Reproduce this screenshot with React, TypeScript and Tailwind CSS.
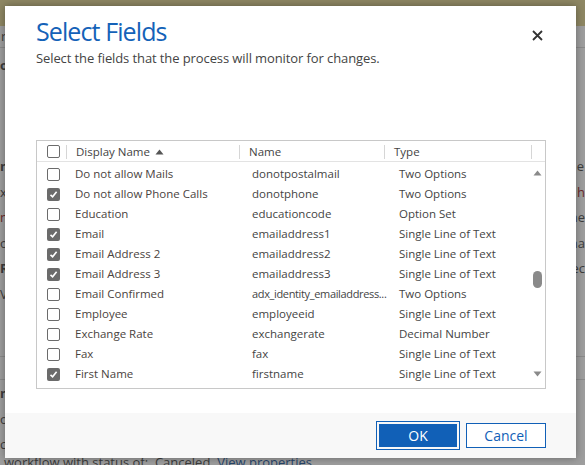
import * as React from "react";

type Row = { checked: boolean; display: string; name: string; type: string };

const rows: Row[] = [
  { checked: false, display: "Do not allow Mails", name: "donotpostalmail", type: "Two Options" },
  { checked: true, display: "Do not allow Phone Calls", name: "donotphone", type: "Two Options" },
  { checked: false, display: "Education", name: "educationcode", type: "Option Set" },
  { checked: true, display: "Email", name: "emailaddress1", type: "Single Line of Text" },
  { checked: true, display: "Email Address 2", name: "emailaddress2", type: "Single Line of Text" },
  { checked: true, display: "Email Address 3", name: "emailaddress3", type: "Single Line of Text" },
  { checked: false, display: "Email Confirmed", name: "adx_identity_emailaddress...", type: "Two Options" },
  { checked: false, display: "Employee", name: "employeeid", type: "Single Line of Text" },
  { checked: false, display: "Exchange Rate", name: "exchangerate", type: "Decimal Number" },
  { checked: false, display: "Fax", name: "fax", type: "Single Line of Text" },
  { checked: true, display: "First Name", name: "firstname", type: "Single Line of Text" },
];

const Checkbox = ({ checked }: { checked: boolean }) =>
  checked ? (
    <span className="flex h-[13px] w-[13px] items-center justify-center rounded-[2px] bg-[#6b6b6b]">
      <svg width="9" height="9" viewBox="0 0 9 9" fill="none">
        <path d="M1.5 4.8 L3.6 6.8 L7.6 1.8" stroke="white" strokeWidth="1.6" />
      </svg>
    </span>
  ) : (
    <span className="block h-[13px] w-[13px] rounded-[2px] border border-[#6b6b6b] bg-white" />
  );

const Tri = ({ up }: { up?: boolean }) => (
  <svg width="9" height="6" viewBox="0 0 9 6" className="block">
    <path d={up ? "M0.5 5.5 L4.5 0.5 L8.5 5.5 Z" : "M0.5 0.5 L8.5 0.5 L4.5 5.5 Z"} fill="#8a8a8a" />
  </svg>
);

// the dimmed page behind the modal, only its edges show
const Backdrop = () => (
  <div className="flex h-full flex-col text-[13px] text-[#3c3c3c]">
    <div className="h-[26px] shrink-0 bg-[#8e8763]" />
    <div className="flex h-[24px] items-center justify-between border-b border-[#8a8a8a] px-[1px]">
      <span>r</span>
      <span />
    </div>
    <div className="flex h-[40px] items-center font-bold">o</div>
    <div className="h-[80px]" />
    <div className="flex flex-col gap-[6px]">
      <div className="flex justify-between">
        <span className="font-bold">n</span>
        <span className="pr-[1px]">e</span>
      </div>
      <div className="flex justify-between">
        <span>xt</span>
        <span className="text-[#6b2a2a]">h</span>
      </div>
      <div className="flex justify-between">
        <span className="text-[#6b2a2a]">n</span>
        <span>ne</span>
      </div>
      <div className="flex justify-between">
        <span>o</span>
        <span>na</span>
      </div>
      <div className="flex justify-between">
        <span className="font-bold">Re</span>
        <span>ec</span>
      </div>
      <div className="flex justify-between">
        <span>V</span>
        <span />
      </div>
    </div>
    <div className="mt-[52px] border-b border-[#8a8a8a]" />
    <div className="mt-[22px] border-b border-[#8a8a8a]" />
    <div className="mt-[4px] flex flex-col gap-[6px]">
      <span className="font-bold">n</span>
      <span>o</span>
      <span>c</span>
    </div>
    <div className="mb-[-4px] mt-auto whitespace-nowrap pl-[4px] leading-[14px]">
      workflow with status of:&nbsp; Canceled. <span className="text-[#27456b]">View properties</span>
    </div>
  </div>
);

export default function App() {
  return (
    <div
      className="relative h-[465px] w-[585px] overflow-hidden bg-[#9e9e9e]"
      style={{ fontFamily: '"Open Sans", "Noto Sans", sans-serif' }}
    >
      <Backdrop />

      {/* dialog */}
      <div className="absolute left-[5px] top-[6px] flex h-[452px] w-[571px] flex-col bg-white shadow-[0_0_8px_rgba(0,0,0,0.35)]">
        <button className="absolute right-[33px] top-[23px] flex h-[12px] w-[12px] items-center justify-center">
          <svg width="11" height="11" viewBox="0 0 11 11">
            <path d="M1 1 L10 10 M10 1 L1 10" stroke="#333" strokeWidth="1.8" />
          </svg>
        </button>

        <div className="pl-[31px] pt-[9px]">
          <h1 className="text-[25px] leading-[32px] tracking-[-0.9px] text-[#1462b8]">Select Fields</h1>
          <p className="mt-[1px] text-[13px] leading-[20px] tracking-[-0.1px] text-[#444]">
            Select the fields that the process will monitor for changes.
          </p>
        </div>

        {/* grid */}
        <div className="ml-[31px] mt-[72px] flex h-[249px] w-[510px] flex-col border border-[#c8c8c8] text-[11.5px]">
          <div className="flex h-[21px] shrink-0 items-center border-b border-[#e3e3e3] pt-[1px] text-[#444]">
            <div className="flex h-full w-[29px] items-center pl-[10px]">
              <Checkbox checked={false} />
            </div>
            <div className="flex h-[14px] w-[173px] items-center border-l border-[#d6d6d6] pl-[9px]">
              Display Name
              <svg width="9" height="6" viewBox="0 0 9 6" className="ml-[5px]">
                <path d="M0.5 5.5 L4.5 0.5 L8.5 5.5 Z" fill="#555" />
              </svg>
            </div>
            <div className="flex h-[14px] w-[145px] items-center border-l border-[#d6d6d6] pl-[9px]">Name</div>
            <div className="flex h-[14px] w-[147px] items-center border-l border-[#d6d6d6] pl-[9px]">Type</div>
            <div className="h-[14px] flex-1 border-l border-[#d6d6d6]" />
          </div>

          <div className="flex min-h-0 flex-1">
            <div className="min-w-0 flex-1 overflow-hidden pt-[2px]">
              {rows.map((r) => (
                <div key={r.name} className="flex h-[20px] items-center whitespace-nowrap">
                  <div className="w-[38px] pl-[10px]">
                    <Checkbox checked={r.checked} />
                  </div>
                  <div className="w-[177px] text-[#4a433e]">{r.display}</div>
                  <div
                    className={
                      r.name.endsWith("...")
                        ? "w-[147px] text-[11px] tracking-[-0.35px] text-[#444]"
                        : "w-[147px] text-[#444]"
                    }
                  >
                    {r.name}
                  </div>
                  <div className="flex-1 text-[#444]">{r.type}</div>
                </div>
              ))}
              <div className="flex h-[20px] items-center">
                <div className="w-[38px] pl-[10px]">
                  <Checkbox checked />
                </div>
              </div>
            </div>
            <div className="flex w-[16px] shrink-0 flex-col items-center pt-[8px]">
              <Tri up />
              <div className="mt-[95px] h-[17px] w-[9px] rounded-full bg-[#8a8a8a]" />
              <div className="mt-[83px]">
                <Tri />
              </div>
            </div>
          </div>
        </div>

        {/* footer */}
        <div className="mt-auto flex h-[45px] items-center justify-end gap-[6px] bg-[#f8f8f8] pr-[30px]">
          <button className="h-[29px] w-[84px] border border-[#1160b7] p-[2px]">
            <span className="flex h-full w-full items-center justify-center bg-[#1160b7] text-[14px] text-white">OK</span>
          </button>
          <button className="flex h-[25px] w-[80px] items-center justify-center border border-[#1160b7] bg-white text-[14px] text-[#1160b7]">
            Cancel
          </button>
        </div>
      </div>
    </div>
  );
}
